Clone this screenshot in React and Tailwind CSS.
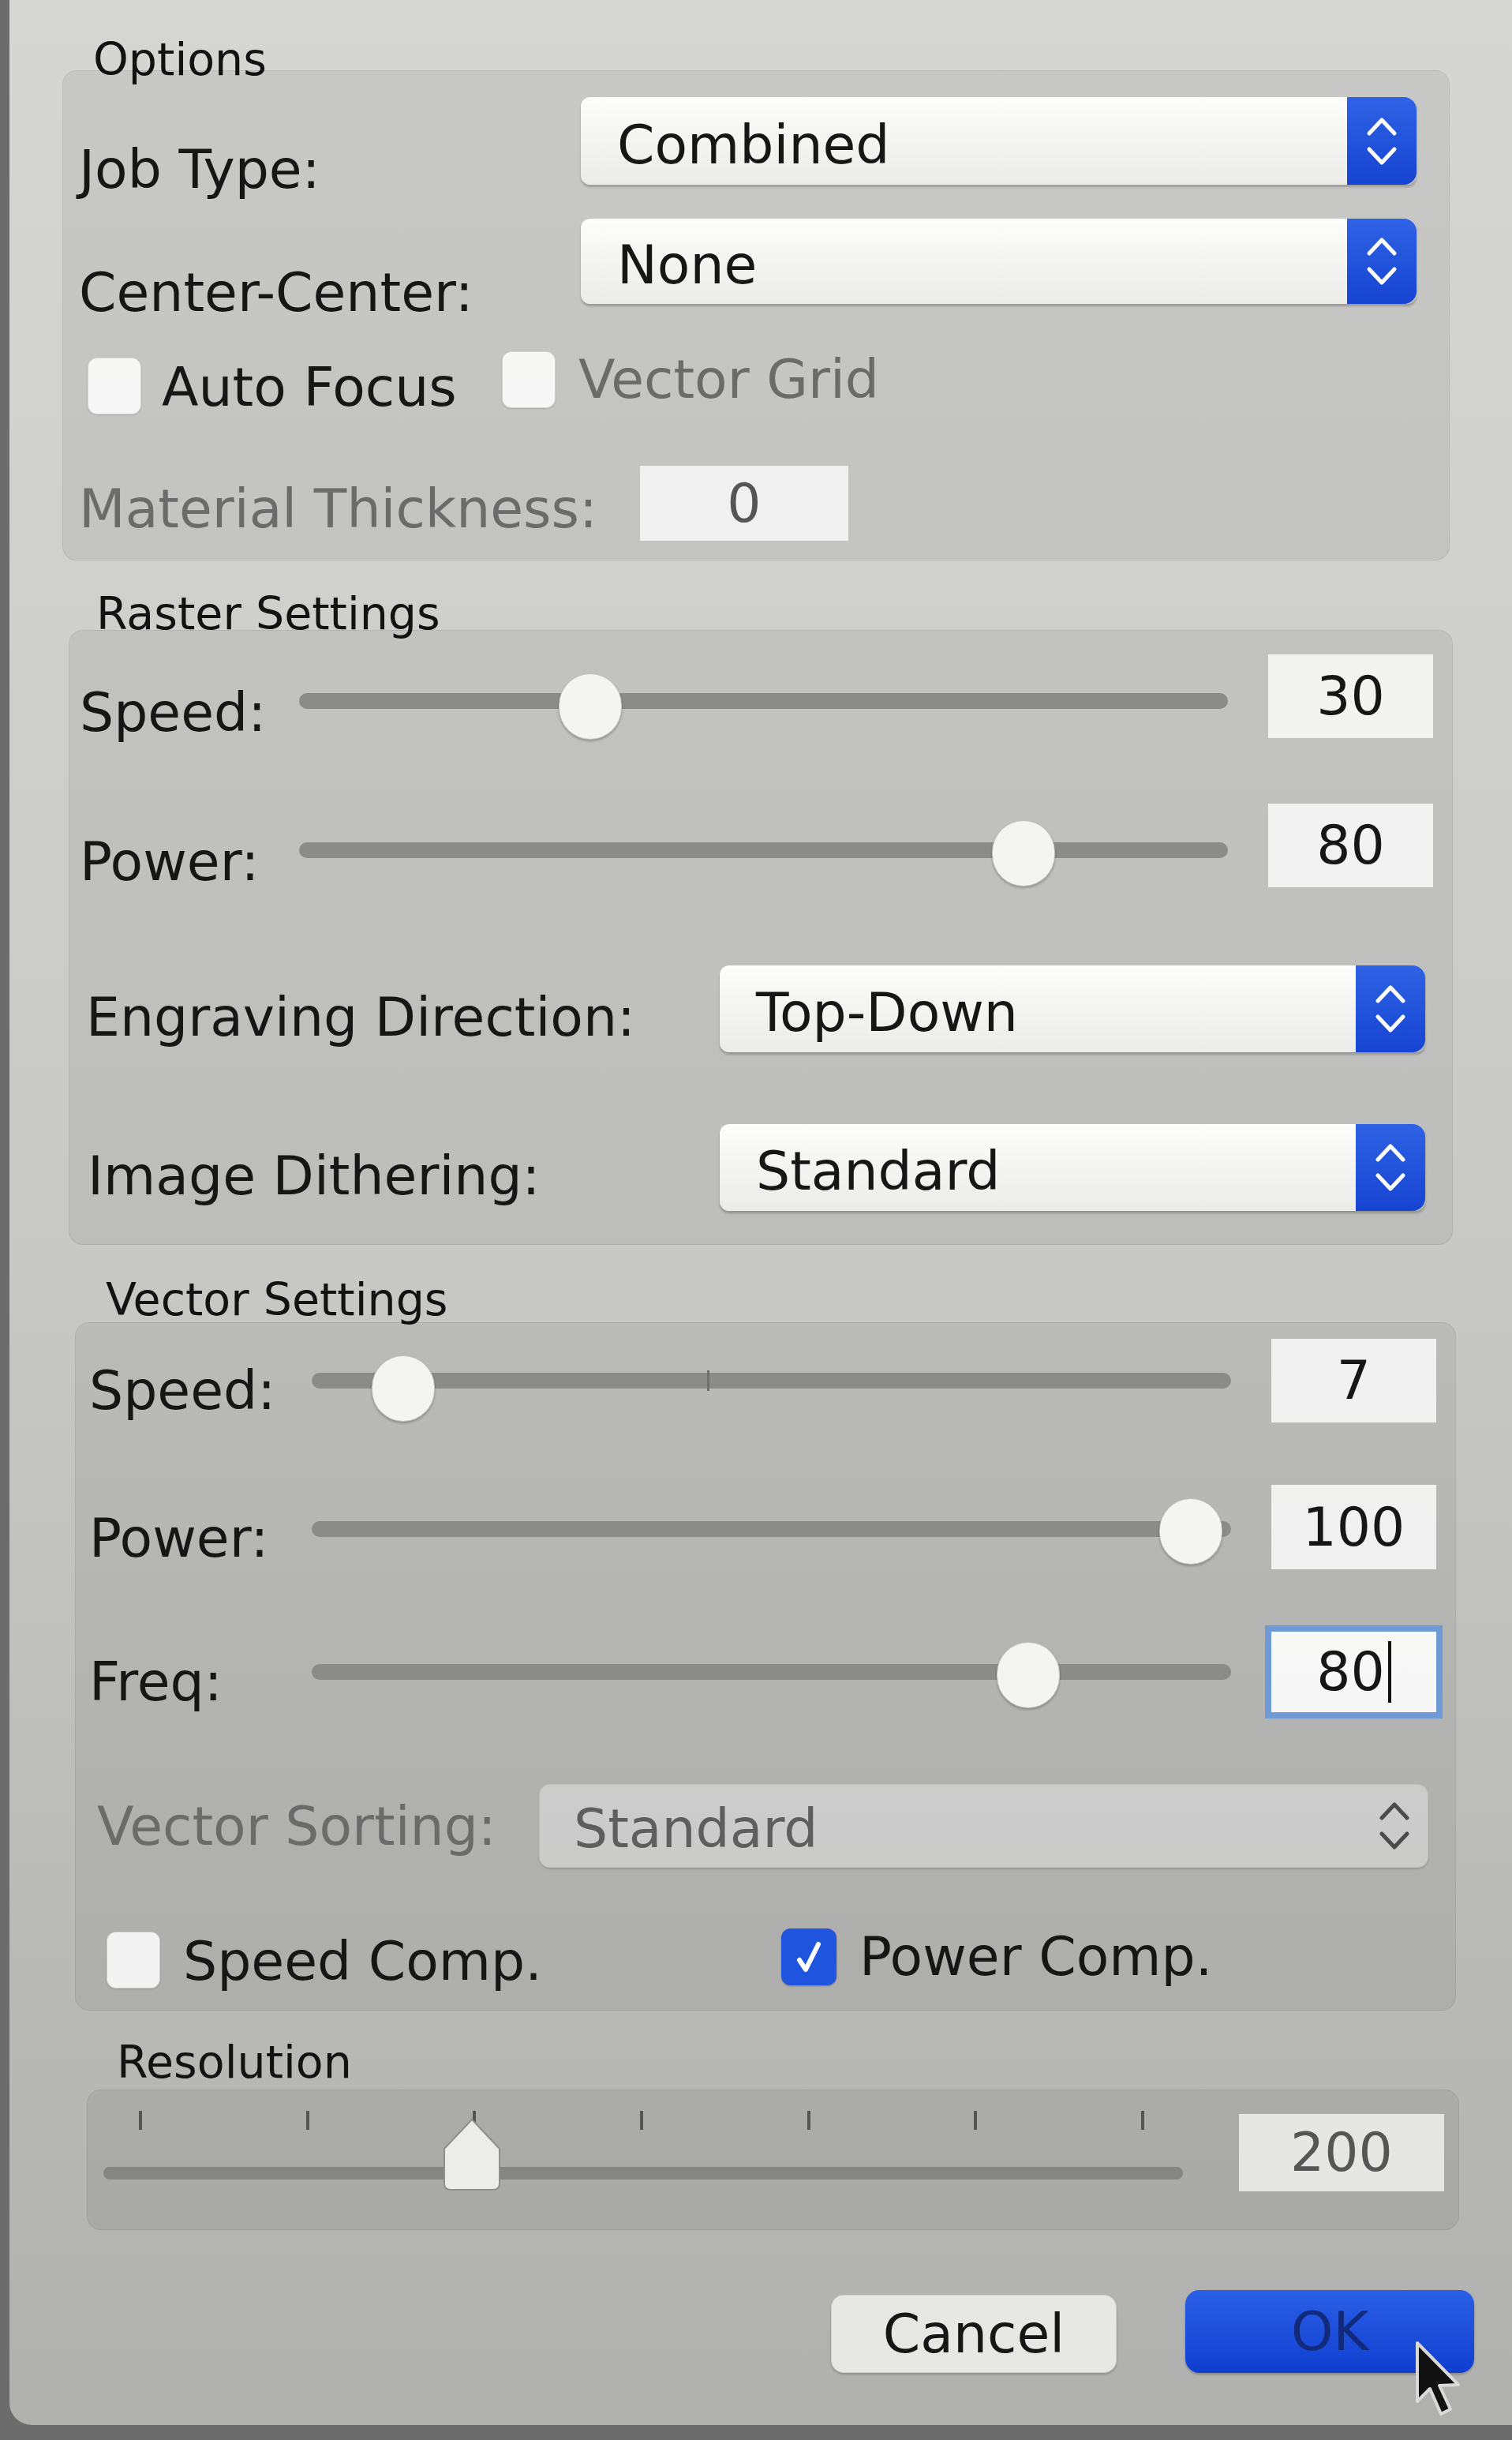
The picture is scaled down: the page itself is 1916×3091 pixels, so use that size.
// Laser job settings dialog — macOS-style sheet, photographed at ~2x

const LABEL = "text-[68px] leading-[68px] text-[#161616] whitespace-nowrap";
const DIM = "text-[68px] leading-[68px] text-[#6b6b6b] whitespace-nowrap";
const TITLE = "text-[57px] leading-[57px] text-[#121212] whitespace-nowrap";

const Chevrons = ({ color = "#ffffff" }) => (
  <svg width="44" height="70" viewBox="0 0 44 70" fill="none" stroke={color} strokeWidth="5" strokeLinecap="round" strokeLinejoin="round">
    <path d="M6 25 L22 8 L38 25" />
    <path d="M6 45 L22 62 L38 45" />
  </svg>
);

// popup button (select)
const Popup = ({ value, className = "", h = "h-[110px]" }) => (
  <div className={`flex ${h} rounded-[12px] shadow-[0_3px_3px_rgba(0,0,0,0.22)] ${className}`}>
    <div className="flex-1 flex items-center pl-[46px] pt-[10px] rounded-l-[12px] bg-linear-to-b from-[#fdfdfc] to-[#ebebea]">
      <span className={LABEL}>{value}</span>
    </div>
    <div className="w-[88px] flex items-center justify-center rounded-r-[16px] bg-linear-to-b from-[#2f62e5] to-[#1644d2]">
      <Chevrons />
    </div>
  </div>
);

const DisabledPopup = ({ value, className = "" }) => (
  <div className={`flex items-center h-[106px] rounded-[14px] bg-white/35 border border-black/[0.06] shadow-[0_2px_2px_rgba(0,0,0,0.12)] ${className}`}>
    <span className="flex-1 pl-[43px] pt-[8px] text-[68px] leading-[68px] text-[#5e5e5e]">{value}</span>
    <span className="w-[84px] flex justify-center">
      <Chevrons color="#4b4b4b" />
    </span>
  </div>
);

const Checkbox = ({ checked }) =>
  checked ? (
    <span className="w-[70px] h-[72px] shrink-0 rounded-[12px] bg-[#1e54de] flex items-center justify-center shadow-[0_1px_2px_rgba(0,0,0,0.3)]">
      <svg width="40" height="46" viewBox="0 0 40 46" fill="none">
        <path d="M8 27 L16 39 L32 7" stroke="#ffffff" strokeWidth="6" strokeLinecap="round" strokeLinejoin="round" />
      </svg>
    </span>
  ) : (
    <span className="w-[68px] h-[72px] shrink-0 rounded-[12px] bg-white/85 border border-black/15 shadow-[0_1px_2px_rgba(0,0,0,0.15)]" />
  );

const ValueBox = ({ children, focused = false, className = "" }) => (
  <div
    className={`w-[209px] shrink-0 flex items-center justify-center bg-white/80 ${
      focused ? "outline-8 outline-solid outline-[#6e9bd6]" : ""
    } ${className}`}
  >
    {children}
  </div>
);

// slider with round knob; pct is the value position along the travel
const Track = ({ pct, trackClass, thumbClass, mark }) => (
  <div className="flex-1 relative h-full">
    <div className={`h-[20px] rounded-full bg-[#8b8b8a] ${trackClass}`} />
    {mark && <div className="absolute left-[43%] top-[40px] w-[3px] h-[26px] bg-[#6f6f6f]" />}
    <div
      className={`absolute w-[80px] h-[84px] -translate-x-1/2 rounded-full bg-[#f4f4f3] border border-black/20 shadow-[0_2px_3px_rgba(0,0,0,0.25)] ${thumbClass}`}
      style={{ left: `calc(40px + ${pct} * (100% - 80px))` }}
    />
  </div>
);

const Cursor = () => (
  <svg width="64" height="104" viewBox="0 0 64 104" className="absolute left-[1790px] top-[2962px]">
    <path
      d="M6 6 L6 80 L22 64 L36 96 L48 90 L34 60 L58 59 Z"
      fill="#111111"
      stroke="#d9d9d9"
      strokeWidth="4"
      strokeLinejoin="round"
    />
  </svg>
);

export default function App() {
  const ticks = [0, 1, 2, 3, 4, 5, 6];

  return (
    <div className="relative w-[1916px] h-[3091px] overflow-hidden bg-[#6c6c6c] font-['DejaVu_Sans',sans-serif]">
      <div className="ml-[12px] h-[3072px] rounded-bl-[28px] bg-linear-to-b from-[#d6d6d4] via-[#c9c9c7] to-[#b0b0ae] flex flex-col">

        {/* ===== Options ===== */}
        <div className="mt-[61px] h-[28px] pl-[106px] flex items-center">
          <span className={TITLE}>Options</span>
        </div>
        <div className="ml-[67px] w-[1758px] h-[621px] shrink-0 rounded-[18px] bg-black/[0.06] border border-black/[0.07] flex flex-col pl-[20px]">
          <div className="mt-[33px] h-[111px] flex">
            <div className="w-[636px] mt-[58px]">
              <span className={LABEL}>Job Type:</span>
            </div>
            <Popup value="Combined" className="w-[1059px]" h="h-[111px]" />
          </div>

          <div className="mt-[43px] h-[108px] flex">
            <div className="w-[636px] mt-[60px]">
              <span className={LABEL}>Center-Center:</span>
            </div>
            <Popup value="None" className="w-[1059px]" h="h-[108px]" />
          </div>

          <div className="mt-[66px] h-[76px] flex items-center">
            <div className="w-[525px] ml-[11px] flex items-center">
              <Checkbox />
              <span className={`${LABEL} ml-[26px] pt-[4px]`}>Auto Focus</span>
            </div>
            <div className="flex items-center -translate-y-[8px]">
              <Checkbox />
              <span className={`${DIM} ml-[29px]`}>Vector Grid</span>
            </div>
          </div>

          <div className="mt-[63px] h-[95px] flex items-center">
            <div className="w-[711px] pt-[14px]">
              <span className={DIM}>Material Thickness:</span>
            </div>
            <div className="w-[264px] h-[95px] flex items-center justify-center bg-white/75">
              <span className="text-[68px] leading-[68px] text-[#555555]">0</span>
            </div>
          </div>
        </div>

        {/* ===== Raster Settings ===== */}
        <div className="mt-[46px] h-[42px] pl-[110px] flex items-center">
          <span className={TITLE}>Raster Settings</span>
        </div>
        <div className="ml-[75px] w-[1754px] h-[779px] shrink-0 rounded-[18px] bg-black/[0.06] border border-black/[0.07] flex flex-col pl-[13px] pr-[24px]">
          <div className="mt-[30px] h-[106px] flex items-start">
            <div className="w-[278px] mt-[40px]">
              <span className={LABEL}>Speed:</span>
            </div>
            <Track pct={0.3} trackClass="mt-[49px]" thumbClass="top-[24px]" />
            <ValueBox className="ml-[51px] h-[106px]">
              <span className={LABEL}>30</span>
            </ValueBox>
          </div>

          <div className="mt-[83px] h-[106px] flex items-start">
            <div className="w-[278px] mt-[40px]">
              <span className={LABEL}>Power:</span>
            </div>
            <Track pct={0.8} trackClass="mt-[49px]" thumbClass="top-[21px]" />
            <ValueBox className="ml-[51px] h-[106px]">
              <span className={LABEL}>80</span>
            </ValueBox>
          </div>

          <div className="mt-[99px] h-[110px] flex items-start">
            <div className="w-[811px] mt-[32px] pl-[8px]">
              <span className={LABEL}>Engraving Direction:</span>
            </div>
            <Popup value="Top-Down" className="w-[894px]" />
          </div>

          <div className="mt-[91px] h-[110px] flex items-start">
            <div className="w-[811px] mt-[32px] pl-[10px]">
              <span className={LABEL}>Image Dithering:</span>
            </div>
            <Popup value="Standard" className="w-[894px]" />
          </div>
        </div>

        {/* ===== Vector Settings ===== */}
        <div className="mt-[40px] h-[58px] pl-[122px] flex items-center">
          <span className={TITLE}>Vector Settings</span>
        </div>
        <div className="ml-[83px] w-[1750px] h-[872px] shrink-0 rounded-[18px] bg-black/[0.06] border border-black/[0.07] flex flex-col pl-[17px] pr-[24px]">
          <div className="mt-[20px] h-[106px] flex items-start">
            <div className="w-[282px] mt-[32px]">
              <span className={LABEL}>Speed:</span>
            </div>
            <Track pct={0.07} trackClass="mt-[43px]" thumbClass="top-[21px]" mark />
            <ValueBox className="ml-[51px] h-[106px]">
              <span className={LABEL}>7</span>
            </ValueBox>
          </div>

          <div className="mt-[79px] h-[107px] flex items-start">
            <div className="w-[282px] mt-[34px]">
              <span className={LABEL}>Power:</span>
            </div>
            <Track pct={0.99} trackClass="mt-[46px]" thumbClass="top-[17px]" />
            <ValueBox className="ml-[51px] h-[107px]">
              <span className={LABEL}>100</span>
            </ValueBox>
          </div>

          <div className="mt-[79px] h-[102px] flex items-start">
            <div className="w-[282px] mt-[30px]">
              <span className={LABEL}>Freq:</span>
            </div>
            <Track pct={0.8} trackClass="mt-[41px]" thumbClass="top-[13px]" />
            <ValueBox focused className="ml-[51px] h-[102px] bg-white/90">
              <span className={LABEL}>80</span>
              <span className="ml-[4px] w-[4px] h-[78px] bg-[#111111]" />
            </ValueBox>
          </div>

          <div className="mt-[91px] h-[106px] flex items-start">
            <div className="w-[570px] mt-[20px] pl-[10px]">
              <span className={DIM}>Vector Sorting:</span>
            </div>
            <DisabledPopup value="Standard" className="w-[1127px]" />
          </div>

          <div className="mt-[79px] h-[76px] flex items-center">
            <div className="w-[855px] ml-[22px] flex items-center">
              <Checkbox />
              <span className={`${LABEL} ml-[29px] pt-[4px]`}>Speed Comp.</span>
            </div>
            <div className="flex items-center -translate-y-[4px]">
              <Checkbox checked />
              <span className={`${LABEL} ml-[29px]`}>Power Comp.</span>
            </div>
          </div>
        </div>

        {/* ===== Resolution ===== */}
        <div className="mt-[30px] h-[70px] pl-[136px] flex items-center">
          <span className={TITLE}>Resolution</span>
        </div>
        <div className="ml-[98px] w-[1739px] h-[178px] shrink-0 rounded-[18px] bg-black/[0.06] border border-black/[0.07] flex items-start">
          <div className="ml-[20px] w-[1368px] relative h-full">
            <div className="mt-[26px] h-[24px] flex justify-between pl-[45px] pr-[49px]">
              {ticks.map((t) => (
                <span key={t} className="w-[4px] h-[24px] bg-[#555555]" />
              ))}
            </div>
            <div className="mt-[47px] h-[16px] rounded-full bg-[#858584]" />
            <svg width="82" height="98" viewBox="0 0 82 98" className="absolute left-[426px] top-[32px]">
              <path
                d="M6 42 L41 5 L76 42 L76 86 Q76 94 68 94 L14 94 Q6 94 6 86 Z"
                fill="#ececeb"
                stroke="#8f8f8f"
                strokeWidth="2"
              />
            </svg>
          </div>
          <div className="ml-[71px] mt-[30px] w-[260px] h-[98px] flex items-center justify-center bg-white/70">
            <span className="text-[68px] leading-[68px] text-[#565656]">200</span>
          </div>
        </div>

        {/* ===== Buttons ===== */}
        <div className="mt-[76px] h-[105px] flex items-end justify-end gap-[87px] pr-[48px]">
          <button className="w-[362px] h-[99px] rounded-[16px] bg-[#e7e7e5] border border-black/10 shadow-[0_2px_3px_rgba(0,0,0,0.2)] flex items-center justify-center">
            <span className={LABEL}>Cancel</span>
          </button>
          <button className="w-[366px] h-[105px] rounded-[18px] bg-linear-to-b from-[#2b5fe6] to-[#0f3ed0] shadow-[0_2px_3px_rgba(0,0,0,0.25)] flex items-center justify-center">
            <span className="text-[68px] leading-[68px] text-[#12297c]">OK</span>
          </button>
        </div>
      </div>

      <Cursor />
    </div>
  );
}
